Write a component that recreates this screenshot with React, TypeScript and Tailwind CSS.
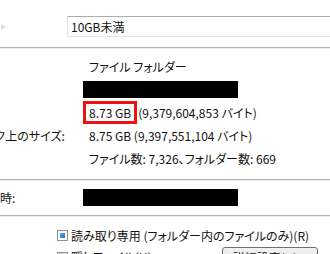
import React from 'react';

type RowProps = {
  label?: string;
  children?: React.ReactNode;
};

function Row({ label = '', children }: RowProps) {
  return (
    <div className="flex items-center h-[23px] whitespace-nowrap">
      <div className="w-[125px] shrink-0">{label}</div>
      <div className="flex items-center">{children}</div>
    </div>
  );
}

function Separator() {
  return (
    <div className="flex flex-col">
      <div className="h-px bg-[#b4b4b4]" />
      <div className="h-px bg-[#ececec]" />
    </div>
  );
}

function BlackBar() {
  return <div className="-ml-[6px] w-[155px] h-[17px] bg-black" />;
}

export default function App() {
  return (
    <div className="relative w-[330px] h-[254px] overflow-hidden bg-white text-[#111] text-[12px] leading-[14px] font-['Noto_Sans_CJK_JP','Liberation_Sans',sans-serif] [font-feature-settings:'palt']">
      {/* name row */}
      <div className="flex items-center pt-[16px]">
        <div className="w-[67px] shrink-0 flex items-center h-[21px]">
          <svg width="5" height="6" viewBox="0 0 5 6" className="ml-[1px]">
            <path d="M0 0 L5 3 L0 6 Z" fill="#dcdcdc" />
          </svg>
        </div>
        <div className="flex-1 -mr-[10px] h-[21px] flex items-center pl-[3px] border border-t-[#abadb3] border-x-[#e2e3ea] border-b-[#e3e9ef] bg-white">
          10GB未満
        </div>
      </div>

      <div className="mt-[10px]">
        <Separator />
      </div>

      <div className="-ml-[36px] mt-[6px] flex flex-col">
        <Row>ファイル フォルダー</Row>
        <Row>
          <BlackBar />
        </Row>
        <Row>
          <span className="-ml-[6px] h-[23px] flex items-center px-[3px] border-[3px] border-[#ee1111]">
            8.73 GB
          </span>
          <span className="ml-[1px]">(9,379,604,853 バイト)</span>
        </Row>
        <Row label="ディスク上のサイズ:">8.75 GB (9,397,551,104 バイト)</Row>
        <Row>ファイル数: 7,326、フォルダー数: 669</Row>
      </div>

      <div className="mt-[9px]">
        <Separator />
      </div>

      <div className="-ml-[36px] mt-[5px]">
        <Row label="作成日時:">
          <BlackBar />
        </Row>
      </div>

      <div className="mt-[6px]">
        <Separator />
      </div>

      {/* attributes */}
      <div className="mt-[7px] pl-[57px] flex flex-col whitespace-nowrap">
        <div className="flex items-center h-[23px]">
          <div className="w-[11px] h-[11px] border border-[#8e8f8f] bg-white p-[2px]">
            <div className="w-full h-full bg-gradient-to-br from-[#5aa8f0] to-[#1c6fcf]" />
          </div>
          <span className="ml-[3px]">読み取り専用 (フォルダー内のファイルのみ)(R)</span>
        </div>
        <div className="flex items-start h-[23px]">
          <div className="flex items-center mt-[3px]">
            <div className="w-[11px] h-[11px] border border-[#8e8f8f] bg-gradient-to-br from-[#dcdcdc] to-[#f6f6f6]" />
            <span className="ml-[3px]">隠しファイル(H)</span>
          </div>
          <div className="ml-auto mr-[12px] w-[96px] h-[22px] flex items-start justify-center pt-[3px] rounded-[3px] border border-[#707070] bg-gradient-to-b from-[#f2f2f2] to-[#d8d8d8]">
            詳細設定(D)...
          </div>
        </div>
      </div>
    </div>
  );
}
